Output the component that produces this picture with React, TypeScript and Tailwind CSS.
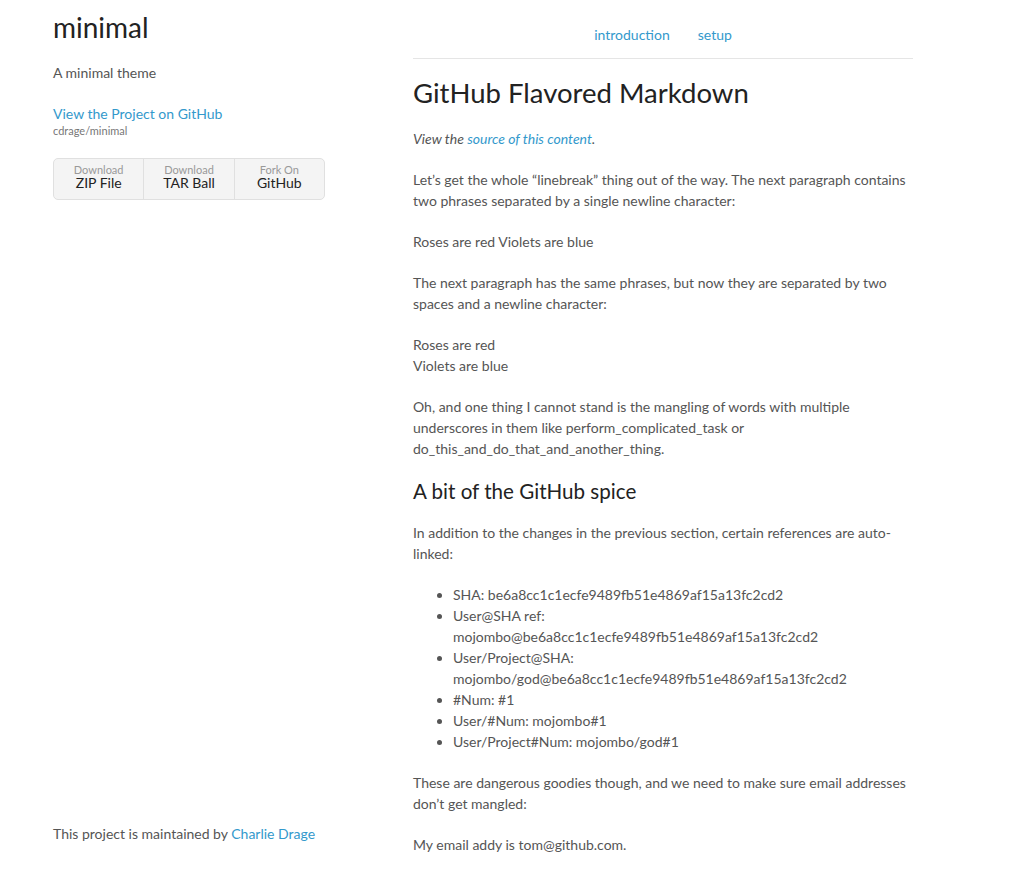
const link = "text-[#3399cc] no-underline";

function Btn({ top, main, last }: { top: string; main: string; last?: boolean }) {
  return (
    <li className={`flex-1 flex flex-col items-center pt-[5px] pb-[9px] ${last ? "" : "border-r border-[#e0e0e0]"}`}>
      <span className="text-[11px] leading-[12px] text-[#999]">{top}</span>
      <span className="text-[14px] leading-[14px] text-[#222]">{main}</span>
    </li>
  );
}

export default function App() {
  return (
    <div
      className="flex pl-[53px] text-[14px] leading-[21px] text-[#555] bg-white min-h-screen"
      style={{ fontFamily: "Lato, 'Liberation Sans', sans-serif" }}
    >
      <header className="w-[360px] shrink-0 sticky top-0 h-screen flex flex-col pt-[9px] pb-[26px]">
        <h1 className="text-[28px] leading-[36px] text-[#222] font-normal mb-[17px]">minimal</h1>
        <p className="mb-[20px]">A minimal theme</p>
        <div>
          <a className={`${link} block`}>View the Project on GitHub</a>
          <small className="block text-[11px] leading-[13px] text-[#777]">cdrage/minimal</small>
        </div>
        <ul className="mt-[21px] w-[272px] flex border border-[#e0e0e0] rounded-[5px] bg-[#f4f4f4] list-none">
          <Btn top="Download" main="ZIP File" />
          <Btn top="Download" main="TAR Ball" />
          <Btn top="Fork On" main="GitHub" last />
        </ul>
        <footer className="mt-auto">
          This project is maintained by <a className={link}>Charlie Drage</a>
        </footer>
      </header>
      <section className="w-[500px] shrink-0 pt-[24px] pb-[4px]">
        <nav className="flex justify-center gap-[28px]">
          <a className={link}>introduction</a>
          <a className={link}>setup</a>
        </nav>
        <hr className="mt-[13px] border-0 border-t border-[#e5e5e5]" />
        <h1 className="mt-[16px] mb-[17px] text-[27.5px] leading-[36px] text-[#222] font-normal">GitHub Flavored Markdown</h1>
        <p className="mb-[20px] italic">
          View the <a className={link}>source of this content</a>.
        </p>
        <p className="mb-[20px]">
          Let’s get the whole “linebreak” thing out of the way. The next paragraph contains two phrases separated by a single newline character:
        </p>
        <p className="mb-[20px]">Roses are red Violets are blue</p>
        <p className="mb-[20px]">
          The next paragraph has the same phrases, but now they are separated by two spaces and a newline character:
        </p>
        <p className="mb-[20px]">
          Roses are red
          <br />
          Violets are blue
        </p>
        <p className="mb-[20px]">
          Oh, and one thing I cannot stand is the mangling of words with multiple underscores in them like perform_complicated_task or do_this_and_do_that_and_another_thing.
        </p>
        <h2 className="mb-[19px] text-[20.6px] leading-[24px] text-[#222] font-normal">A bit of the GitHub spice</h2>
        <p className="mb-[20px]">
          In addition to the changes in the previous section, certain references are auto-linked:
        </p>
        <ul className="mb-[20px] pl-[40px] list-disc">
          <li>SHA: be6a8cc1c1ecfe9489fb51e4869af15a13fc2cd2</li>
          <li>User@SHA ref: mojombo@be6a8cc1c1ecfe9489fb51e4869af15a13fc2cd2</li>
          <li>User/Project@SHA: mojombo/god@be6a8cc1c1ecfe9489fb51e4869af15a13fc2cd2</li>
          <li>#Num: #1</li>
          <li>User/#Num: mojombo#1</li>
          <li>User/Project#Num: mojombo/god#1</li>
        </ul>
        <p className="mb-[20px]">
          These are dangerous goodies though, and we need to make sure email addresses don’t get mangled:
        </p>
        <p>My email addy is tom@github.com.</p>
      </section>
    </div>
  );
}
